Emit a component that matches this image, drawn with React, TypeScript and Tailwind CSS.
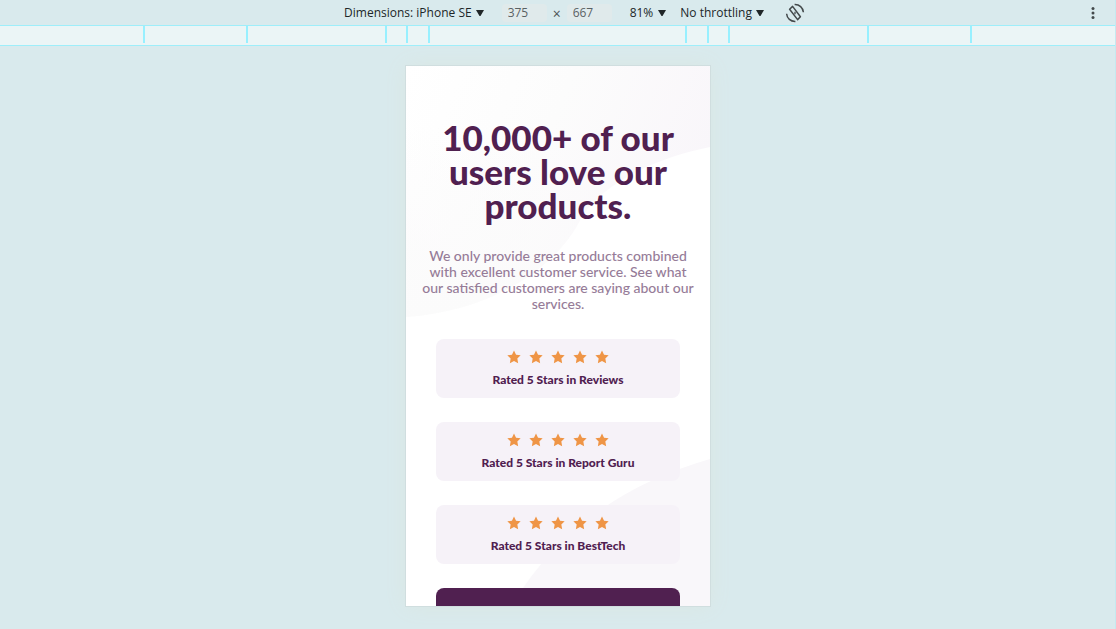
import React from "react";

const breakpoints = [
  "w-[103px]",
  "w-[139px]",
  "w-[21px]",
  "w-[22px]",
  "w-[257px]",
  "w-[22px]",
  "w-[21px]",
  "w-[139px]",
  "w-[103px]",
];

const ratings = [
  "Rated 5 Stars in Reviews",
  "Rated 5 Stars in Report Guru",
  "Rated 5 Stars in BestTech",
];

function Caret() {
  return (
    <svg viewBox="0 0 8 6" className="h-[6px] w-2 fill-[#202628]" aria-hidden="true">
      <path d="M0 0h8L4.5 6h-1z" />
    </svg>
  );
}

function RotateIcon() {
  return (
    <svg
      viewBox="0 0 20 20"
      className="size-5 fill-none stroke-[#43494b]"
      strokeWidth="1.5"
      aria-hidden="true"
    >
      <path d="M4.6 6.2 7.6 3.4 15.4 13.8 12.6 16.6z" strokeLinejoin="round" />
      <path d="M10 8.8v2.4" strokeWidth="1.3" />
      <path d="M9.6 1.6c4.8-.2 8.4 3 8.8 7.6M10.4 18.4c-4.8.2-8.4-3-8.8-7.6" />
    </svg>
  );
}

function Star() {
  return (
    <svg viewBox="0 0 24 24" className="size-[14px] fill-[#ef9546]" aria-hidden="true">
      <path d="M12 .8 15.5 8l7.9 1.1-5.7 5.6 1.4 7.9L12 18.9l-7.1 3.7 1.4-7.9L.6 9.1 8.5 8z" />
    </svg>
  );
}

function Toolbar() {
  return (
    <header className="flex h-[26px] items-center border-b border-[#9eeefa] pr-4 text-xs text-[#202628]">
      <div className="flex flex-1 items-center justify-center pl-[62px]">
        <button className="flex items-center gap-1">
          Dimensions: iPhone SE <Caret />
        </button>
        <input
          aria-label="Width"
          defaultValue="375"
          className="ml-[18px] h-[18px] w-[45px] rounded bg-[#e0eaeb] pl-[6px] text-[#5a6163]"
        />
        <span className="mx-[6px] mt-[3px] text-sm leading-4 text-[#4a5254]">×</span>
        <input
          aria-label="Height"
          defaultValue="667"
          className="h-[18px] w-[45px] rounded bg-[#e0eaeb] pl-[6px] text-[#5a6163]"
        />
        <button className="ml-[18px] flex items-center gap-[5px]">
          81% <Caret />
        </button>
        <button className="ml-[14px] flex items-center gap-1">
          No throttling <Caret />
        </button>
        <button aria-label="Rotate" className="ml-[21px]">
          <RotateIcon />
        </button>
      </div>
      <button aria-label="More options">
        <svg viewBox="0 0 12 12" className="size-3 fill-[#43494b]" aria-hidden="true">
          <circle cx="6" cy="1.6" r="1.5" />
          <circle cx="6" cy="6" r="1.5" />
          <circle cx="6" cy="10.4" r="1.5" />
        </svg>
      </button>
    </header>
  );
}

function Backdrop() {
  return (
    <svg
      viewBox="0 0 304 540"
      preserveAspectRatio="none"
      className="absolute inset-0 size-full"
      aria-hidden="true"
    >
      <defs>
        <linearGradient id="topTint" gradientUnits="userSpaceOnUse" x1="0" y1="0" x2="290" y2="120">
          <stop offset="0" stopColor="#ffffff" />
          <stop offset="0.5" stopColor="#fcfcfc" />
          <stop offset="1" stopColor="#f9f6fa" />
        </linearGradient>
        <linearGradient id="lowTint" x1="0" y1="0" x2="0" y2="1">
          <stop offset="0" stopColor="#fbfafb" stopOpacity="0" />
          <stop offset="1" stopColor="#fbfbfb" />
        </linearGradient>
      </defs>
      <path d="M0 0H304V81C250 92 214 112 192 132C174 148 174 159 163 172C130 216 70 246 0 251Z" fill="url(#topTint)" />
      <path d="M0 60H210L163 172C130 216 70 246 0 251Z" fill="url(#lowTint)" />
      <path d="M304 393C230 414 163 455 117 522L105 540H304Z" fill="#f9f7fa" />
    </svg>
  );
}

export default function App() {
  return (
    <div className="flex min-h-screen flex-col border-r border-[#c5eaf0] bg-[#d9eaed] font-['Open_Sans',sans-serif]">
      <Toolbar />
      <div className="flex h-5 justify-center overflow-hidden border-b border-[#9eeefa] bg-[#ebf5f6] pb-[2px]">
        {breakpoints.map((width, i) => (
          <span key={i} className={`${width} shrink-0 border-l-2 border-[#98f0ff]`} />
        ))}
        <span className="w-[2px] shrink-0 bg-[#98f0ff]" />
      </div>
      <div className="flex flex-1 justify-center pt-5 pb-[23px] pl-px">
        <main className="relative h-[540px] w-[304px] overflow-hidden bg-white font-[Lato,sans-serif] text-[#502050] shadow-[0_0_0_1px_#d0dedf,0_0_20px_#dae6e2]">
          <Backdrop />
          <div className="relative flex flex-col items-center">
            <h1 className="mt-[54px] text-center text-[35px] leading-[34px] font-black">
              10,000+ of our
              <br />
              users love our
              <br />
              products.
            </h1>
            <p className="mt-[26px] text-center text-[14px] leading-4 font-medium whitespace-nowrap text-[#967c98]">
              We only provide great products combined
              <br />
              with excellent customer service. See what
              <br />
              our satisfied customers are saying about our
              <br />
              services.
            </p>
            <ul className="mt-[27px] flex w-4/5 flex-col gap-6">
              {ratings.map((label) => (
                <li key={label} className="flex h-[59px] flex-col items-center rounded-lg bg-[#f6f2f8] pt-[11px]">
                  <div className="flex gap-2">
                    {[0, 1, 2, 3, 4].map((n) => (
                      <Star key={n} />
                    ))}
                  </div>
                  <p className="mt-2 text-[12px] leading-4 font-black">{label}</p>
                </li>
              ))}
              <li className="h-[120px] rounded-lg bg-[#502050]" />
            </ul>
          </div>
        </main>
      </div>
    </div>
  );
}
